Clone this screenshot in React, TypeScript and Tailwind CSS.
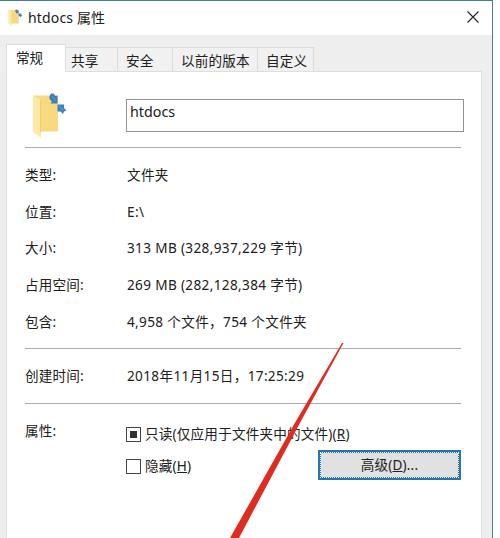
import type { ReactNode } from "react";

const tabs = [
  { label: "共享", box: "w-[52px] pl-[5px]" },
  { label: "安全", box: "w-[55px] pl-[8px]" },
  { label: "以前的版本", box: "w-[85px] pl-[8px]" },
  { label: "自定义", box: "w-[56px] pl-[8px]" },
];

function Folder({ className }: { className: string }) {
  return (
    <svg viewBox="0 0 36 46" className={className} preserveAspectRatio="none">
      <path d="M1 3.5H26V39.5H9Z" fill="#f8d980" />
      <path d="M1 3.5L9 8V46L1 40Z" fill="#ffe9a6" />
      <path d="M8.5 8V40" stroke="#f0cd70" strokeWidth="1" />
      <path d="M17.5 4L19 1.500H21.500L23.500 4L25.500 3.500V11.500H18.500L20 9.500L17.500 7Z" fill="#3a80ba" />
      <path d="M25.500 12.500H32V16L34.500 18.500L32 19.500L31 22L28.500 19.500H25.500Z" fill="#3a80ba" />
      <path d="M20 4L24 9M27 14L31 18" stroke="#5a9bd0" strokeWidth="1.2" />
    </svg>
  );
}

function Row({ label, children }: { label: string; children: ReactNode }) {
  return (
    <div className="flex h-[36.6px] items-center whitespace-nowrap">
      <span className="w-[102px] tracking-[0.15px]">{label}</span>
      <span className="tracking-[0.34px]">{children}</span>
    </div>
  );
}

function Check({ mixed, children }: { mixed?: boolean; children: ReactNode }) {
  return (
    <div className="flex h-5 items-center gap-1 whitespace-nowrap">
      <span className="flex size-[15px] items-center justify-center border border-[#444]">
        {mixed && <span className="size-[7px] bg-[#303030]" />}
      </span>
      <span className="tracking-[0.18px]">{children}</span>
    </div>
  );
}

export default function App() {
  return (
    <div className="relative h-[538px] w-[500px] overflow-hidden bg-white font-['Noto_Sans','Noto_Sans_CJK_SC',sans-serif] text-[13.6px] leading-5 text-[#202020]">
      <div className="flex h-[538px] w-[493px] flex-col border-t border-r border-[#43818f] bg-[#eeeeee]">
        <header className="flex h-[34px] shrink-0 items-center bg-white pr-[13px] pb-px pl-2">
          <Folder className="h-[17px] w-[15px]" />
          <h1 className="ml-[5px] text-[14px] tracking-[0.15px]">htdocs 属性</h1>
          <svg viewBox="0 0 12 12" className="mb-px ml-auto size-3">
            <path d="M.5 .5L11.5 11.5M11.5 .5L.5 11.5" stroke="#222" strokeWidth="1.1" />
          </svg>
        </header>
        <nav className="flex h-9 shrink-0 items-end pl-[6px] whitespace-nowrap">
          <div className="z-10 -mb-px h-7 w-[60px] border border-b-0 border-[#dcdcdc] bg-white pt-[3px] pl-[9px]">常规</div>
          {tabs.map((t) => (
            <div key={t.label} className={`h-6 border-t border-r border-[#dcdcdc] bg-[#f1f1f1] pt-[3px] tracking-[0.15px] ${t.box}`}>
              {t.label}
            </div>
          ))}
        </nav>
        <main className="ml-[6px] w-[476px] grow border border-b-0 border-[#dcdfdf] bg-white pl-[18px]">
          <div className="flex h-[75px] pt-5">
            <Folder className="ml-[7px] h-[46px] w-[36px]" />
            <div className="mt-[7px] ml-[58px] h-[33px] w-[338px] border border-[#929292] pt-[2px] pl-[3px] text-[14.3px]">htdocs</div>
          </div>
          <div className="h-px w-[436px] bg-[#ababab]" />
          <section className="h-[200px] pt-[9px]">
            <Row label="类型:">文件夹</Row>
            <Row label="位置:">E:\</Row>
            <Row label="大小:">313 MB (328,937,229 字节)</Row>
            <Row label="占用空间:">269 MB (282,128,384 字节)</Row>
            <Row label="包含:">4,958 个文件，754 个文件夹</Row>
          </section>
          <div className="h-px w-[436px] bg-[#ababab]" />
          <section className="h-[54px] pt-[9px]">
            <Row label="创建时间:">2018年11月15日，17:25:29</Row>
          </section>
          <div className="h-px w-[436px] bg-[#ababab]" />
          <section className="flex pt-[17px]">
            <span className="w-[101px] shrink-0 tracking-[0.15px]">属性:</span>
            <div className="w-[335px] pt-[3px]">
              <Check mixed>只读(仅应用于文件夹中的文件)(<u>R</u>)</Check>
              <div className="mt-[6px] flex justify-between">
                <div className="pt-[6px]"><Check>隐藏(<u>H</u>)</Check></div>
                <button className="h-[30px] w-[143px] border-2 border-[#2874ad] bg-[#2874ad]">
                  <span className="flex h-full items-center justify-center border border-dotted border-white bg-[#e1e1e1] bg-clip-padding">
                    <span className="tracking-[0.15px]">高级(<u>D</u>)...</span>
                  </span>
                </button>
              </div>
            </div>
          </section>
        </main>
      </div>
      <svg viewBox="0 0 500 538" className="pointer-events-none absolute inset-0 size-full">
        <path d="M343.5 343L342 343L296 421L230 538H239L301 421Z" fill="#e02b20" />
      </svg>
    </div>
  );
}
